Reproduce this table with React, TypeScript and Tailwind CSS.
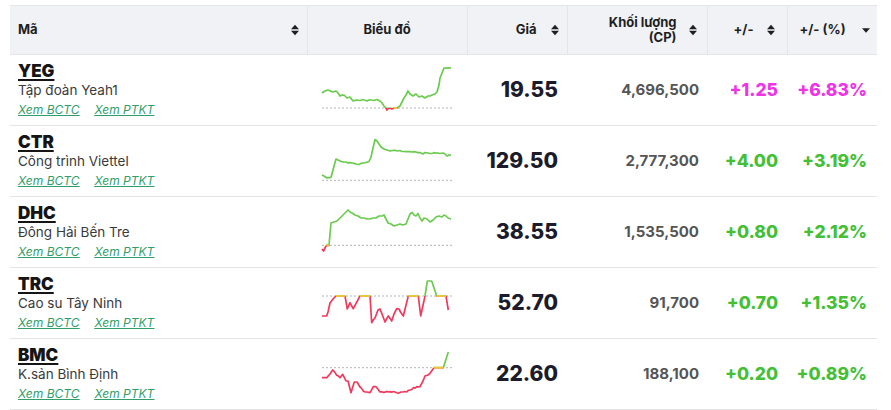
import React from 'react';

type Pt = [number, number];

type Row = {
  code: string;
  name: string;
  price: string;
  vol: string;
  chg: string;
  pct: string;
  ceil: boolean;
  ref: number;
  pts: Pt[];
};

const rows: Row[] = [
  {
    code: 'YEG',
    name: 'Tập đoàn Yeah1',
    price: '19.55',
    vol: '4,696,500',
    chg: '+1.25',
    pct: '+6.83%',
    ceil: true,
    ref: 41,
    pts: [[0,26],[3,24],[6,23],[11,25],[14,24],[18,29],[22,28],[25,31],[28,30],[31,34],[35,33],[38,33.5],[41,32.5],[45,34],[49,33],[52,33.5],[55,32.5],[58,34],[60,36],[62,39],[64,41],[65,43],[67,41],[70,42],[72,41],[75,41],[78,39],[80,35],[82,31],[84,28],[86,24],[88,27],[91,29],[94,27],[97,30],[100,29],[103,31],[106,29],[110,28],[113,27],[115,25],[117,18],[118,11],[120,6],[122,1],[129,1]],
  },
  {
    code: 'CTR',
    name: 'Công trình Viettel',
    price: '129.50',
    vol: '2,777,300',
    chg: '+4.00',
    pct: '+3.19%',
    ceil: false,
    ref: 42.3,
    pts: [[0,37],[2,38],[5,40],[9,39.5],[11,32],[14,21],[16,22],[18,23],[22,24],[26,25],[30,25],[34,26],[37,26.5],[40,25],[44,24.5],[47,23.5],[49,19],[51,10],[53,1.5],[55,3],[57,6],[59,9],[62,11],[65,12],[68,13],[71,12.5],[75,13],[78,12.5],[82,13.5],[86,13.5],[90,14],[94,14],[98,14.5],[101,16],[103,14.5],[106,15],[110,15.5],[114,15],[118,15.5],[121,15],[123,16],[125,18],[129,17]],
  },
  {
    code: 'DHC',
    name: 'Đông Hải Bến Tre',
    price: '38.55',
    vol: '1,535,500',
    chg: '+0.80',
    pct: '+2.12%',
    ceil: false,
    ref: 36.3,
    pts: [[0,40],[1.5,42],[3,39],[4.5,36.3],[7,36.3],[9,14],[12,13],[15,12],[18,9],[21,6],[24,3],[26,1],[28,3],[30,4],[33,6],[36,7],[39,9],[42,9],[45,10],[48,10],[51,9],[54,9],[57,7],[60,7],[62,6],[64,10],[66,14],[69,15],[72,17],[75,16],[78,15],[81,16],[84,15],[86,10],[88,5],[90,3.5],[92,6],[94,7],[96,4.5],[98,9],[100,12],[102,9],[105,10],[108,13],[111,11],[114,8],[117,7],[120,8],[122,6],[124,7],[126,9],[129,10]],
  },
  {
    code: 'TRC',
    name: 'Cao su Tây Ninh',
    price: '52.70',
    vol: '91,700',
    chg: '+0.70',
    pct: '+1.35%',
    ceil: false,
    ref: 16,
    pts: [[0,36],[4.7,36],[6,32],[8,23],[11,19],[14,16],[23,16],[25.3,29],[28,22.7],[31.3,28.7],[38,16],[48,16],[49.7,42.7],[53,38],[56,30],[58,29],[60,34],[63,42],[66.3,36],[69.7,41],[72,34],[74.7,28.7],[77,29],[78.5,32],[81.3,36],[86.3,16],[96.3,16],[98.7,36],[103,16],[105.3,1],[109.7,1],[114.7,16],[124,16],[126.3,30]],
  },
  {
    code: 'BMC',
    name: 'K.sản Bình Định',
    price: '22.60',
    vol: '188,100',
    chg: '+0.20',
    pct: '+0.89%',
    ceil: false,
    ref: 16.7,
    pts: [[0,26.7],[4.7,26.7],[8,23],[10.7,19],[14.7,24.3],[18,26.7],[20.7,23.3],[24,30],[26,30],[29,41.7],[32.3,31],[35,31],[38,36],[41.3,40],[45,41],[48,41.7],[51.3,35.7],[54,35.7],[58,41],[73,41],[76.3,42.3],[79,41],[84.7,41],[88,39],[91.3,36.7],[98,35.7],[101,30],[103,25],[106,24],[108,22.3],[112,16.7],[121.3,16.7],[126.3,1]],
  },
];

// add a little noise between waypoints so lines look like tick data
function roughen(pts: Pt[], ref: number): Pt[] {
  const out: Pt[] = [pts[0]];
  let seed = 7;
  for (let i = 1; i < pts.length; i++) {
    const [x0, y0] = pts[i - 1];
    const [x1, y1] = pts[i];
    const far = Math.abs(y0 - ref) > 2 && Math.abs(y1 - ref) > 2 && (y0 - ref) * (y1 - ref) > 0;
    const steps = far ? Math.floor((x1 - x0) / 1.6) : 0;
    for (let s = 1; s < steps; s++) {
      const t = s / steps;
      seed = (seed * 9301 + 49297) % 233280;
      const j = (seed / 233280 - 0.5) * 1.4;
      out.push([x0 + (x1 - x0) * t, y0 + (y1 - y0) * t + j]);
    }
    out.push(pts[i]);
  }
  return out;
}

function Spark({ id, pts, refY }: { id: string; pts: Pt[]; refY: number }) {
  const line = roughen(pts, refY);
  const d = line.map(p => `${p[0].toFixed(1)},${p[1].toFixed(1)}`).join(' ');
  const flat: Pt[][] = [];
  for (let i = 1; i < pts.length; i++) {
    if (pts[i - 1][1] === refY && pts[i][1] === refY) flat.push([pts[i - 1], pts[i]]);
  }
  return (
    <svg width="132" height="46" viewBox="-1 0 132 46" className="mx-auto block">
      <defs>
        <clipPath id={`up-${id}`}>
          <rect x="-1" y="-2" width="134" height={refY + 2} />
        </clipPath>
        <clipPath id={`dn-${id}`}>
          <rect x="-1" y={refY} width="134" height={48 - refY} />
        </clipPath>
      </defs>
      <line x1="0" x2="130" y1={refY} y2={refY} stroke="#b3b3b3" strokeWidth="1" strokeDasharray="2 2" />
      <polyline points={d} fill="none" stroke="#6bcb4e" strokeWidth="1.7" strokeLinejoin="round" clipPath={`url(#up-${id})`} />
      <polyline points={d} fill="none" stroke="#ef3a5d" strokeWidth="1.7" strokeLinejoin="round" clipPath={`url(#dn-${id})`} />
      {flat.map(([a, b], i) => (
        <line key={i} x1={a[0]} y1={a[1]} x2={b[0]} y2={b[1]} stroke="#f2c33b" strokeWidth="1.9" />
      ))}
    </svg>
  );
}

function SortIcon() {
  return (
    <svg width="8" height="12" viewBox="0 0 8 12" className="shrink-0">
      <path d="M0 5.2 L4 0.8 L8 5.2 Z M0 6.8 L4 11.2 L8 6.8 Z" fill="#1f1f1f" />
    </svg>
  );
}

function CaretDown() {
  return (
    <svg width="8" height="5" viewBox="0 0 8 5" className="shrink-0">
      <path d="M0 0.3 L8 0.3 L4 4.7 Z" fill="#1f1f1f" />
    </svg>
  );
}

export default function App() {
  return (
    <div className="min-h-screen bg-white pt-[5px] pl-[10px] font-['Inter','Noto_Sans',sans-serif]">
      <table className="table-fixed border-collapse w-[867px]">
        <colgroup>
          <col className="w-[297px]" />
          <col className="w-[160px]" />
          <col className="w-[100px]" />
          <col className="w-[140px]" />
          <col className="w-[80px]" />
          <col className="w-[90px]" />
        </colgroup>
        <thead>
          <tr className="bg-[#f0f2f6] h-[49px] border-t border-b border-[#e3e5ea] text-[13px] font-extrabold text-[#1e1e1e]">
            <th className="border-r border-[#e3e5ea] pl-2 pr-[8px]">
              <div className="flex items-center justify-between">
                <span>Mã</span>
                <SortIcon />
              </div>
            </th>
            <th className="border-r border-[#e3e5ea] text-center">Biểu đồ</th>
            <th className="border-r border-[#e3e5ea] pr-[8px]">
              <div className="flex items-center justify-end gap-[14px]">
                <span>Giá</span>
                <SortIcon />
              </div>
            </th>
            <th className="border-r border-[#e3e5ea] pr-[10px]">
              <div className="flex items-center justify-end gap-[12px]">
                <span className="text-right leading-[15px]">Khối lượng<br />(CP)</span>
                <SortIcon />
              </div>
            </th>
            <th className="border-r border-[#e3e5ea] pr-[12px]">
              <div className="flex items-center justify-end gap-[13px]">
                <span>+/-</span>
                <SortIcon />
              </div>
            </th>
            <th className="pl-[12px] pr-[7px]">
              <div className="flex items-center justify-between">
                <span>+/- (%)</span>
                <CaretDown />
              </div>
            </th>
          </tr>
        </thead>
        <tbody>
          {rows.map(r => {
            const color = r.ceil ? 'text-[#ee34e6]' : 'text-[#45bf36]';
            return (
              <tr key={r.code} className="h-[71px] border-b border-[#e4e4e4]">
                <td className="pl-2 align-top pt-[6px]">
                  <div className="text-[17px] leading-[20px] font-black text-[#151515] underline underline-offset-[2px] decoration-[1.5px]">{r.code}</div>
                  <div className="text-[13.5px] leading-[18px] text-[#3a3a3a]">{r.name}</div>
                  <div className="flex gap-[15px] mt-[3px] text-[12px] leading-[16px] italic text-[#2f9e6b] underline">
                    <a href="#">Xem BCTC</a>
                    <a href="#">Xem PTKT</a>
                  </div>
                </td>
                <td className="align-middle">
                  <Spark id={r.code} pts={r.pts} refY={r.ref} />
                </td>
                <td className="text-right pr-[9px] text-[21px] font-extrabold text-[#1b1b2b]">{r.price}</td>
                <td className="text-right pr-[8px] text-[15px] font-bold text-[#555]">{r.vol}</td>
                <td className={`text-right pr-[9px] text-[17.5px] font-extrabold ${color}`}>{r.chg}</td>
                <td className={`text-right pr-[10px] text-[17.5px] font-extrabold ${color}`}>{r.pct}</td>
              </tr>
            );
          })}
        </tbody>
      </table>
    </div>
  );
}
